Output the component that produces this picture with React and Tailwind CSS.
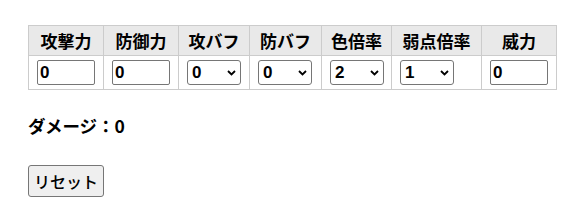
import { useState } from "react";

const heads = [
  { label: "攻撃力", w: "w-[75px]" },
  { label: "防御力", w: "w-[75px]" },
  { label: "攻バフ", w: "w-[71px]" },
  { label: "防バフ", w: "w-[72px]" },
  { label: "色倍率", w: "w-[70px]" },
  { label: "弱点倍率", w: "w-[90px]" },
  { label: "威力", w: "w-[75px]" },
];

function NumInput({ value, onChange }) {
  return (
    <input
      value={value}
      onChange={(e) => onChange(e.target.value)}
      className="block h-[25px] w-[58px] rounded-[2px] border border-[#767676] bg-white px-[2px] text-[17px] font-bold leading-none text-black outline-none font-['Liberation_Sans',Arial,sans-serif]"
    />
  );
}

function Pick({ value, onChange, options }) {
  return (
    <div className="relative h-[25px] w-[54px]">
      <select
        value={value}
        onChange={(e) => onChange(e.target.value)}
        className="block h-[25px] w-[54px] appearance-none rounded-[3px] border border-[#767676] bg-white pl-[4px] text-[17px] font-bold leading-none text-black outline-none font-['Liberation_Sans',Arial,sans-serif]"
      >
        {options.map((o) => (
          <option key={o} value={o}>
            {o}
          </option>
        ))}
      </select>
      <svg
        className="pointer-events-none absolute right-[5px] top-[10px]"
        width="9"
        height="6"
        viewBox="0 0 9 6"
        fill="none"
      >
        <path d="M1 1l3.5 3.5L8 1" stroke="#000" strokeWidth="1.8" />
      </svg>
    </div>
  );
}

export default function App() {
  const [atk, setAtk] = useState("0");
  const [def, setDef] = useState("0");
  const [atkBuff, setAtkBuff] = useState("0");
  const [defBuff, setDefBuff] = useState("0");
  const [color, setColor] = useState("2");
  const [weak, setWeak] = useState("1");
  const [power, setPower] = useState("0");

  const reset = () => {
    setAtk("0");
    setDef("0");
    setAtkBuff("0");
    setDefBuff("0");
    setColor("2");
    setWeak("1");
    setPower("0");
  };

  const cell = "border border-[#cccccc] px-[8px] py-[4px]";

  return (
    <main className="min-h-screen bg-white pl-[28px] pt-[25px] text-black font-['Noto_Sans_CJK_JP','Noto_Sans',sans-serif]">
      <table className="border-collapse table-fixed w-[528px]">
        <thead>
          <tr className="bg-[#e9e9e9]">
            {heads.map((h) => (
              <th
                key={h.label}
                className={`${cell} ${h.w} h-[30px] whitespace-nowrap text-center text-[17px] font-bold leading-[21px]`}
              >
                {h.label}
              </th>
            ))}
          </tr>
        </thead>
        <tbody>
          <tr>
            <td className={`${cell} h-[34px]`}>
              <NumInput value={atk} onChange={setAtk} />
            </td>
            <td className={cell}>
              <NumInput value={def} onChange={setDef} />
            </td>
            <td className={cell}>
              <Pick value={atkBuff} onChange={setAtkBuff} options={["0", "1", "2", "3", "4", "5", "6"]} />
            </td>
            <td className={cell}>
              <Pick value={defBuff} onChange={setDefBuff} options={["0", "1", "2", "3", "4", "5", "6"]} />
            </td>
            <td className={cell}>
              <Pick value={color} onChange={setColor} options={["0.5", "1", "2"]} />
            </td>
            <td className={cell}>
              <Pick value={weak} onChange={setWeak} options={["1", "1.2"]} />
            </td>
            <td className={cell}>
              <NumInput value={power} onChange={setPower} />
            </td>
          </tr>
        </tbody>
      </table>

      <p className="mt-[24px] text-[17.5px] font-bold leading-[24px]">ダメージ：0</p>

      <button
        onClick={reset}
        className="mt-[27px] flex h-[32px] items-center rounded-[3px] border border-[#767676] bg-[#efefef] px-[5px] text-[16px] font-medium leading-[20px]"
      >
        リセット
      </button>
    </main>
  );
}
